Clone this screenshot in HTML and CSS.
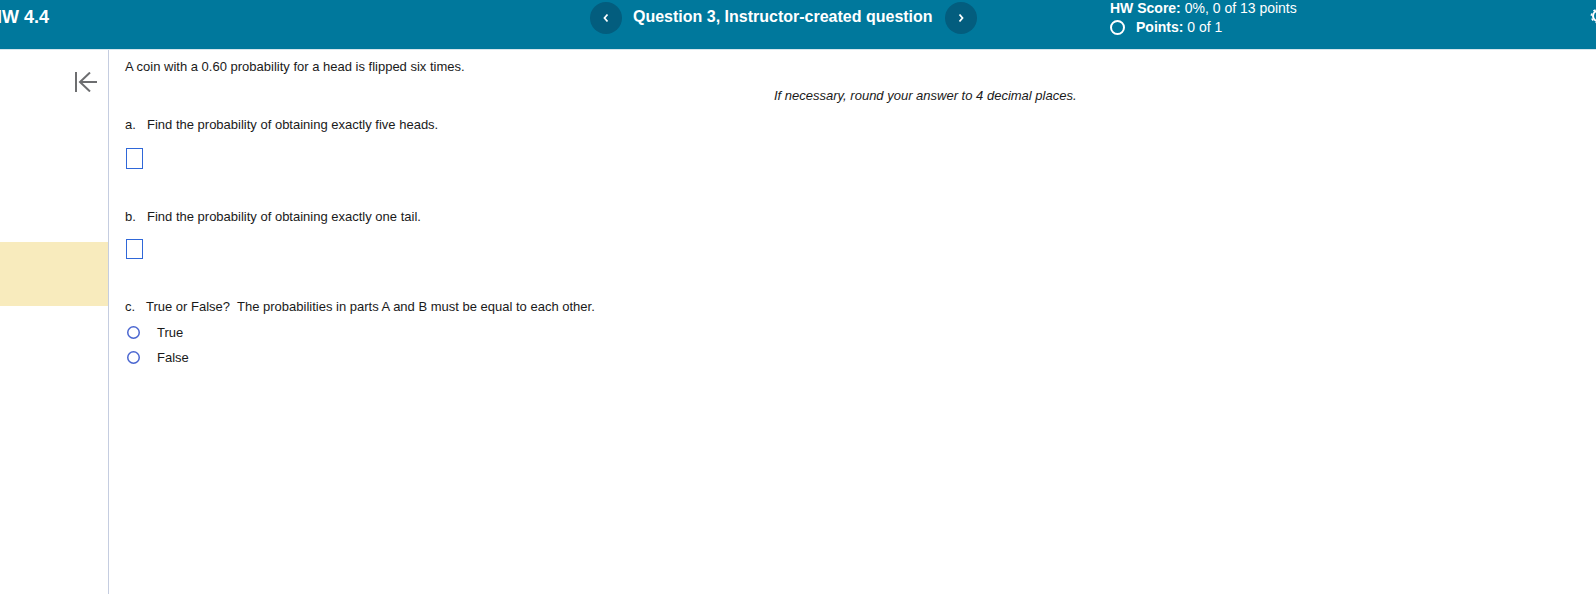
FILE: index.html
```html
<!DOCTYPE html>
<html lang="en">
<head>
    <meta charset="UTF-8">
    <meta name="viewport" content="width=device-width, initial-scale=1.0">
    <title>HW 4.4 - Question 3</title>
    <link rel="stylesheet" href="styles.css">
</head>
<body>
    <header class="topbar">
        <div class="hw-title">HW 4.4</div>
        <nav class="question-nav">
            <button type="button" class="nav-btn">
                <svg width="8" height="10" viewBox="0 0 8 10"><path d="M5.5 1.5 2.5 5l3 3.5" fill="none" stroke="#fff" stroke-width="1.8"/></svg>
            </button>
            <span class="question-title">Question 3, Instructor-created question</span>
            <button type="button" class="nav-btn">
                <svg width="8" height="10" viewBox="0 0 8 10"><path d="M2.5 1.5 5.5 5l-3 3.5" fill="none" stroke="#fff" stroke-width="1.8"/></svg>
            </button>
        </nav>
        <div class="score">
            <div><b>HW Score:</b> 0%, 0 of 13 points</div>
            <div class="points"><span class="points-ring"></span><span><b>Points:</b> 0 of 1</span></div>
        </div>
        <div class="gear">
            <svg width="16" height="16" viewBox="0 0 16 16"><circle cx="8" cy="8" r="5" fill="none" stroke="#fff" stroke-width="2"/><circle cx="8" cy="8" r="6.6" fill="none" stroke="#fff" stroke-width="1.6" stroke-dasharray="2.4 2.8"/></svg>
        </div>
    </header>
    <div class="main">
        <aside class="sidebar">
            <button type="button" class="collapse-btn">
                <svg width="22" height="20" viewBox="0 0 22 20"><path d="M1 0v20M22 10H5M15 .5 5 10l10 9.5" fill="none" stroke="#6d6e70" stroke-width="2"/></svg>
            </button>
            <div class="current-mark"></div>
        </aside>
        <section class="question">
            <p class="intro">A coin with a 0.60 probability for a head is flipped six times.</p>
            <p class="hint">If necessary, round your answer to 4 decimal places.</p>
            <p class="part part-a"><span class="part-label">a.</span>Find the probability of obtaining exactly five heads.</p>
            <div class="answer-box box-a"></div>
            <p class="part part-b"><span class="part-label">b.</span>Find the probability of obtaining exactly one tail.</p>
            <div class="answer-box box-b"></div>
            <p class="part part-c"><span class="part-label part-label-c">c.</span>True or False?&nbsp; The probabilities in parts A and B must be equal to each other.</p>
            <div class="option">
                <svg class="radio" width="13" height="13" viewBox="0 0 13 13"><circle cx="6.5" cy="6.5" r="5.75" fill="none" stroke="#4a66d0" stroke-width="1.5"/></svg>
                True
            </div>
            <div class="option">
                <svg class="radio" width="13" height="13" viewBox="0 0 13 13"><circle cx="6.5" cy="6.5" r="5.75" fill="none" stroke="#4a66d0" stroke-width="1.5"/></svg>
                False
            </div>
        </section>
    </div>
</body>
</html>
```

FILE: styles.css
```css
html, body {
    margin: 0;
    padding: 0;
    height: 100%;
    overflow: hidden;
}
body {
    font-family: "Liberation Sans", Arial, sans-serif;
    font-size: 13px;
    color: #1a1a1a;
    background-color: #ffffff;
    display: flex;
    flex-direction: column;
}
.topbar {
    display: flex;
    height: 49px;
    flex-shrink: 0;
    color: #ffffff;
    background-color: #00789c;
    border-bottom: 1px solid #d5e6ec;
}
.hw-title {
    width: 601px;
    margin-left: -11px;
    padding-top: 7px;
    flex-shrink: 0;
    font-size: 18px;
    line-height: 20px;
    font-weight: bold;
}
.question-nav {
    display: flex;
    align-items: flex-start;
    width: 520px;
    flex-shrink: 0;
    padding-top: 2px;
}
.nav-btn {
    display: flex;
    align-items: center;
    justify-content: center;
    width: 32px;
    height: 32px;
    padding: 0;
    border: none;
    border-radius: 50%;
    background-color: #035d7e;
}
.question-title {
    margin: 5px 12px 0 11px;
    font-size: 16px;
    line-height: 20px;
    font-weight: bold;
    white-space: nowrap;
}
.score {
    width: 480px;
    flex-shrink: 0;
    font-size: 14px;
    line-height: 16px;
}
.points {
    display: flex;
    align-items: center;
    gap: 11px;
    margin-top: 3px;
}
.points-ring {
    width: 11px;
    height: 11px;
    border: 2px solid #ffffff;
    border-radius: 50%;
}
.gear {
    padding-top: 8px;
}
.main {
    display: flex;
    flex: 1;
}
.sidebar {
    display: flex;
    flex-direction: column;
    width: 108px;
    flex-shrink: 0;
    border-right: 1px solid #c5cde0;
}
.collapse-btn {
    align-self: flex-end;
    width: 22px;
    height: 20px;
    margin: 22px 11px 0 0;
    padding: 0;
    border: none;
    background: none;
}
.current-mark {
    height: 64px;
    margin-top: 150px;
    background-color: #f8ebbd;
}
.question {
    padding: 9px 0 0 16px;
    flex: 1;
}
.question p {
    margin: 0;
    line-height: 15px;
}
.question .hint {
    margin-top: 14px;
    padding-left: 649px;
    font-style: italic;
}
.question .part-a {
    margin-top: 14px;
}
.part-label {
    display: inline-block;
    width: 22px;
}
.part-label-c {
    width: 21px;
}
.answer-box {
    width: 15px;
    border: 1px solid #2f67d8;
}
.box-a {
    height: 19px;
    margin: 16px 0 0 1px;
}
.box-b {
    height: 18px;
    margin: 15px 0 0 1px;
}
.question .part-b {
    margin-top: 40px;
}
.question .part-c {
    margin-top: 40px;
}
.option {
    display: flex;
    align-items: center;
    height: 25px;
}
.part-c + .option {
    margin-top: 6px;
}
.radio {
    margin: 0 17px 0 2px;
}
```
